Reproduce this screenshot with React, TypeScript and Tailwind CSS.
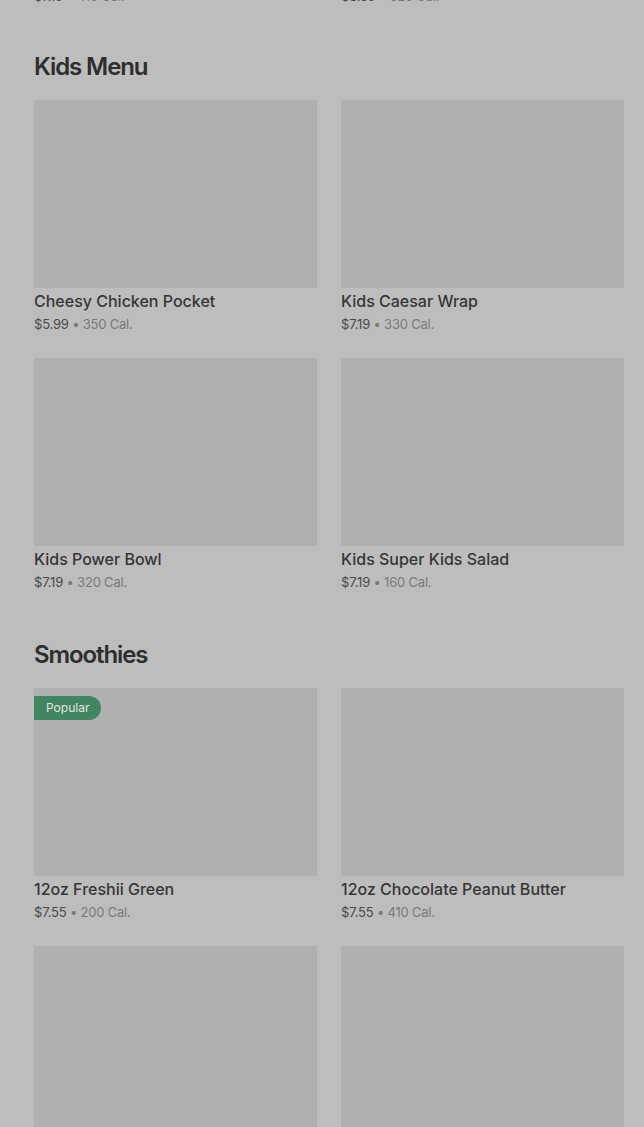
import React from "react";

type Item = { name: string; price: string; cal: string; popular?: boolean };

const sections: { title: string; items: Item[] }[] = [
  {
    title: "Kids Menu",
    items: [
      { name: "Cheesy Chicken Pocket", price: "$5.99", cal: "350 Cal." },
      { name: "Kids Caesar Wrap", price: "$7.19", cal: "330 Cal." },
      { name: "Kids Power Bowl", price: "$7.19", cal: "320 Cal." },
      { name: "Kids Super Kids Salad", price: "$7.19", cal: "160 Cal." },
    ],
  },
  {
    title: "Smoothies",
    items: [
      { name: "12oz Freshii Green", price: "$7.55", cal: "200 Cal.", popular: true },
      { name: "12oz Chocolate Peanut Butter", price: "$7.55", cal: "410 Cal." },
      { name: "16oz Mango Madness", price: "$8.35", cal: "280 Cal." },
      { name: "16oz Berry Blast", price: "$8.35", cal: "260 Cal." },
    ],
  },
];

function PriceLine({ price, cal }: { price: string; cal: string }) {
  return (
    <div className="h-[20px] text-[13px] leading-[20px] tracking-[-0.2px]">
      <span className="text-[#4a4a4a]">{price}</span>
      <span className="text-[#7a7a7a]"> • {cal}</span>
    </div>
  );
}

function Card({ item }: { item: Item }) {
  return (
    <div className="flex flex-col">
      <div className="relative h-[188px] bg-[#b0b0b0]">
        {item.popular && (
          <div className="absolute left-0 top-[8px] flex h-[24px] items-center rounded-r-full bg-[#3f8661] pl-[12px] pr-[12px] text-[12px] text-[#e4e4e4]">
            Popular
          </div>
        )}
      </div>
      <div className="mt-[3px] h-[20px] text-[16px] font-medium leading-[20px] text-[#363636]">
        {item.name}
      </div>
      <div className="mt-[3px]">
        <PriceLine price={item.price} cal={item.cal} />
      </div>
    </div>
  );
}

export default function App() {
  return (
    <div
      className="h-[1127px] overflow-hidden bg-[#bdbdbd] pl-[34px] pr-[20px]"
      style={{ fontFamily: "Inter, 'Noto Sans', sans-serif" }}
    >
      <div className="-mt-[14px] grid grid-cols-2 gap-x-[24px]">
        <PriceLine price="$7.19" cal="410 Cal." />
        <PriceLine price="$8.39" cal="520 Cal." />
      </div>
      {sections.map((s, i) => (
        <div key={s.title} className={i === 0 ? "mt-[45px]" : "mt-[47px]"}>
          <h2 className="h-[32px] text-[24px] font-semibold leading-[32px] tracking-[-1.1px] text-[#2e2e2e]">
            {s.title}
          </h2>
          <div className="mt-[17px] grid grid-cols-2 gap-x-[24px] gap-y-[24px]">
            {s.items.map((it) => (
              <Card key={it.name} item={it} />
            ))}
          </div>
        </div>
      ))}
    </div>
  );
}
